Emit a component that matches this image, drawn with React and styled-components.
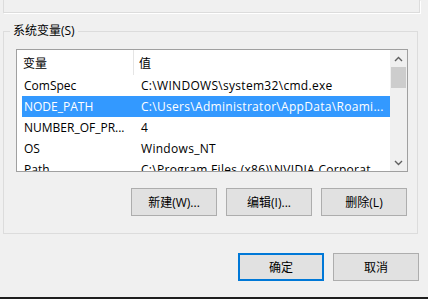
import React from 'react'
import styled, { createGlobalStyle } from 'styled-components'

const GlobalStyle = createGlobalStyle`
    html, body {
        margin: 0;
        padding: 0;
        background: #f0f0f0;
        overflow: hidden;
    }
    body {
        font-family: "Open Sans", "Noto Sans CJK SC", sans-serif;
        font-size: 12px;
        color: #000;
    }
`

const rows = [
    { name: 'ComSpec', value: 'C:\\WINDOWS\\system32\\cmd.exe' },
    { name: 'NODE_PATH', value: 'C:\\Users\\Administrator\\AppData\\Roami...', selected: true },
    { name: 'NUMBER_OF_PR...', value: '4' },
    { name: 'OS', value: 'Windows_NT' },
    { name: 'Path', value: 'C:\\Program Files (x86)\\NVIDIA Corporat...' },
]

const Chevron = ({ up }) => (
    <svg width="9" height="6" viewBox="0 0 9 6">
        <path
            d={up ? 'M1 5 L4.5 1.5 L8 5' : 'M1 1 L4.5 4.5 L8 1'}
            fill="none"
            stroke="#606060"
            strokeWidth="1.4"
        />
    </svg>
)

const App = () => {
    return (
        <Page>
            <GlobalStyle />
            <UpperGroup />
            <GroupBox>
                <Legend>系统变量(S)</Legend>
                <ListView>
                    <ListBody>
                        <HeaderRow>
                            <HeaderCell $w={117}>变量</HeaderCell>
                            <HeaderCell>值</HeaderCell>
                        </HeaderRow>
                        {rows.map((r) => (
                            <Row key={r.name} $selected={r.selected}>
                                <Cell $w={115}>{r.name}</Cell>
                                <Cell $value>{r.value}</Cell>
                            </Row>
                        ))}
                    </ListBody>
                    <ScrollBar>
                        <ArrowBox><Chevron up /></ArrowBox>
                        <Track>
                            <Thumb />
                        </Track>
                        <ArrowBox><Chevron /></ArrowBox>
                    </ScrollBar>
                </ListView>
                <ButtonRow>
                    <Button>新建(W)...</Button>
                    <Button>编辑(I)...</Button>
                    <Button>删除(L)</Button>
                </ButtonRow>
            </GroupBox>
            <DialogButtons>
                <Button $default>确定</Button>
                <Button>取消</Button>
            </DialogButtons>
            <TaskEdge />
        </Page>
    )
}

export default App

const Page = styled.div`
    width: 428px;
    height: 299px;
    display: flex;
    flex-direction: column;
`

const UpperGroup = styled.div`
    margin-left: 3px;
    width: 415px;
    height: 12px;
    border: 1px solid #dcdcdc;
    border-top: none;
    box-shadow: 1px 1px 0 #fff;
`

const GroupBox = styled.fieldset`
    margin: 11px 0 0 3px;
    padding: 0;
    width: 415px;
    height: 210px;
    box-sizing: border-box;
    border: 1px solid #dcdcdc;
    display: flex;
    flex-direction: column;
    align-items: flex-start;
`

const Legend = styled.legend`
    margin-left: 6px;
    padding: 0 3px;
    font-size: 12px;
    line-height: 14px;
    color: #000;
`

const ListView = styled.div`
    margin: 11px 0 0 12px;
    width: 392px;
    height: 123px;
    box-sizing: border-box;
    border: 1px solid #a0a0a0;
    background: #fff;
    display: flex;
    overflow: hidden;
`

const ListBody = styled.div`
    flex: 1;
    overflow: hidden;
`

const HeaderRow = styled.div`
    height: 25px;
    display: flex;
    align-items: center;
`

const HeaderCell = styled.div`
    box-sizing: border-box;
    width: ${(p) => (p.$w ? `${p.$w}px` : 'auto')};
    height: 100%;
    display: flex;
    align-items: center;
    padding-left: ${(p) => (p.$w ? '6px' : '5px')};
    border-right: ${(p) => (p.$w ? '1px solid #e5e5e5' : 'none')};
`

const Row = styled.div`
    height: 21px;
    margin-left: 5px;
    display: flex;
    align-items: center;
    white-space: nowrap;
    background: ${(p) => (p.$selected ? '#3399ff' : 'transparent')};
    color: ${(p) => (p.$selected ? '#fff' : '#000')};
`

const Cell = styled.div`
    width: ${(p) => (p.$w ? `${p.$w}px` : 'auto')};
    flex-shrink: 0;
    padding-left: 2px;
    overflow: hidden;
    letter-spacing: ${(p) => (p.$value ? '0.3px' : '0')};
`

const ScrollBar = styled.div`
    width: 17px;
    background: #f0f0f0;
    display: flex;
    flex-direction: column;
`

const ArrowBox = styled.div`
    height: 17px;
    display: flex;
    align-items: center;
    justify-content: center;
`

const Track = styled.div`
    flex: 1;
    padding: 0 1px;
`

const Thumb = styled.div`
    height: 21px;
    background: #cdcdcd;
`

const ButtonRow = styled.div`
    align-self: stretch;
    margin: 16px 10px 0 0;
    display: flex;
    justify-content: flex-end;
    gap: 9px;
`

const Button = styled.button`
    width: 86px;
    height: 28px;
    box-sizing: border-box;
    background: #e1e1e1;
    border: ${(p) => (p.$default ? '2px solid #0078d7' : '1px solid #adadad')};
    font-family: "Open Sans", "Noto Sans CJK SC", sans-serif;
    font-size: 12px;
    color: #000;
    padding: 0;
    display: flex;
    align-items: center;
    justify-content: center;
`

const DialogButtons = styled.div`
    margin: 19px 9px 0 0;
    display: flex;
    justify-content: flex-end;
    gap: 9px;
`

const TaskEdge = styled.div`
    margin-top: auto;
    height: 2px;
    background: #1e1e1e;
`
